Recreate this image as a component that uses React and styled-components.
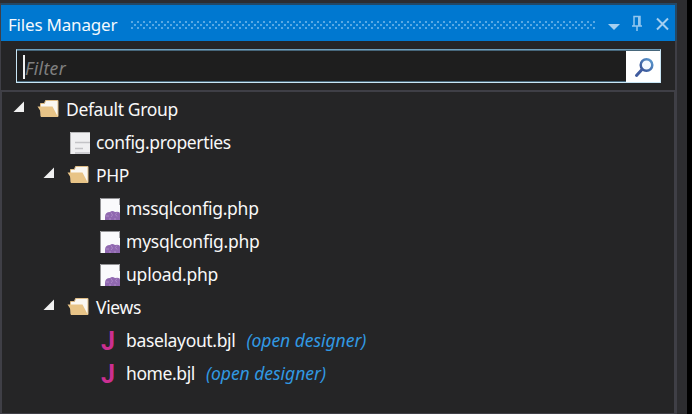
import React from 'react';
import styled, { createGlobalStyle } from 'styled-components';

const GlobalStyle = createGlobalStyle`
  * { box-sizing: border-box; }
  body { margin: 0; background: #000; font-family: "Noto Sans", sans-serif; }
`;

const Frame = styled.div`
  width: 692px;
  height: 414px;
  overflow: hidden;
  background: #000;
`;

const Dock = styled.div`
  width: 687px;
  height: 414px;
  padding-top: 3px;
  background: #2d2d30;
`;

const Panel = styled.section`
  width: 677px;
  height: 411px;
  display: flex;
  flex-direction: column;
  border-right: 2px solid #3f3f46;
  border-left: 1px solid #3f3f46;
  background: #252526;
`;

const TitleBar = styled.header`
  width: 676px;
  height: 38px;
  flex: none;
  display: flex;
  align-items: center;
  border-top: 2px solid #254865;
  border-right: 2px solid #254865;
  padding-left: 7px;
  background: #0078d0;
`;

const Title = styled.h1`
  margin: 3px 0 0;
  width: 123px;
  font-size: 17px;
  line-height: 24px;
  font-weight: 400;
  letter-spacing: -0.2px;
  white-space: nowrap;
  color: #f4f9fd;
`;

const Grip = styled.svg`
  display: block;
  flex: none;
  margin-top: 3px;
`;

const TitleButton = styled.button`
  display: flex;
  flex: none;
  width: ${(p) => p.$width}px;
  height: 20px;
  margin-left: ${(p) => p.$gap}px;
  padding: 0;
  border: 0;
  background: none;
`;

const FilterArea = styled.div`
  height: 49px;
  flex: none;
  padding: 8px 0 0 15px;
`;

const FilterBox = styled.div`
  display: flex;
  width: 645px;
  height: 34px;
  border: 1px solid #c9e6f5;
  border-top-color: #6f9fba;
  box-shadow: inset 0 1px #47677b, inset 0 -1px #47677b;
  background: #1e1e1e;
`;

const FilterField = styled.div`
  flex: 1;
  display: flex;
  align-items: center;
  padding: 2px 0 0 6px;
`;

const Caret = styled.i`
  width: 2px;
  height: 24px;
  background: #f1f1f1;
`;

const Placeholder = styled.span`
  margin-top: 1px;
  font-size: 17.5px;
  line-height: 24px;
  font-style: italic;
  letter-spacing: 0.35px;
  color: #808080;
`;

const SearchButton = styled.button`
  width: 34px;
  height: 31px;
  margin-top: 1px;
  padding: 0;
  border: 0;
  background: #fff;
  svg { display: block; }
`;

const Tree = styled.div`
  flex: 1;
  margin-right: -1px;
  border: 2px solid #3f3f46;
  border-width: 2px 2px 1px 1px;
  padding-top: 1px;
`;

const Row = styled.div`
  display: flex;
  align-items: center;
  height: 33px;
  padding-left: ${(p) => 10 + p.$level * 30}px;
`;

const ArrowSlot = styled.span`
  width: 25px;
  height: 20px;
  flex: none;
  svg { display: block; }
`;

const IconSlot = styled.span`
  display: flex;
  justify-content: flex-start;
  width: 29px;
  height: 24px;
  flex: none;
`;

const Label = styled.span`
  margin-top: -1px;
  font-size: 17.5px;
  line-height: 26px;
  letter-spacing: ${(p) => p.$spacing}px;
  white-space: pre;
  color: #f8f8f8;
`;

const DesignerLink = styled.a`
  margin: -1px 0 0 11px;
  font-size: 17.5px;
  line-height: 26px;
  font-style: italic;
  letter-spacing: -0.03px;
  white-space: pre;
  color: #3199e2;
`;

const Letter = styled.b`
  padding: 1px 0 0 4px;
  font: 700 25px/24px Roboto, sans-serif;
  color: #cb2f91;
`;

const FolderIcon = () => (
  <svg width="24" height="24">
    <path d="M3.5 9V5.5h4l1-3h12.5v16H4z" fill="#faf7f1" stroke="#dfbd86" />
    <path d="M0.5 8.5H15.5L21 19H4v-5z" fill="#e8c487" />
  </svg>
);

const TextIcon = () => (
  <svg width="24" height="24">
    <path d="M3 1h20v22H3z" fill="#efeff1" />
    <path d="M3.5 23V1.5H23" fill="none" stroke="#b6b6b8" />
    <path d="M8 11.5h15M8 17.5h8M8 22h15" stroke="#c3c3c7" strokeWidth="1.5" />
  </svg>
);

const PhpIcon = () => (
  <svg width="24" height="24">
    <path d="M3 1h20v22H3z" fill="#fafafc" />
    <path d="M3.5 23V1.5H22" fill="none" stroke="#929295" />
    <path d="M22.5 1v7" stroke="#a9a9ad" />
    <path d="M8 23v-3q0-5 5-5 2-2 5 0 5-1 5 2v6z" fill="#9068b0" />
    <path d="M14 15.5q3 3 0 4.5M20 15.5q-3 2 0 4M9 19h3M13 23v-2M18 23v-2" fill="none" stroke="#ad8bc6" />
  </svg>
);

const icons = {
  folder: <FolderIcon />,
  text: <TextIcon />,
  php: <PhpIcon />,
  layout: <Letter>J</Letter>,
};

const rows = [
  { name: 'Default Group', level: 0, icon: 'folder', spacing: -0.36 },
  { name: 'config.properties', level: 1, icon: 'text', spacing: -0.36 },
  { name: 'PHP', level: 1, icon: 'folder', spacing: -0.4 },
  { name: 'mssqlconfig.php', level: 2, icon: 'php', spacing: -0.26 },
  { name: 'mysqlconfig.php', level: 2, icon: 'php', spacing: -0.23 },
  { name: 'upload.php', level: 2, icon: 'php', spacing: -0.22 },
  { name: 'Views', level: 1, icon: 'folder', spacing: -0.35 },
  { name: 'baselayout.bjl', level: 2, icon: 'layout', spacing: -0.35 },
  { name: 'home.bjl', level: 2, icon: 'layout', spacing: -0.4 },
];

const TreeRow = ({ name, level, icon, spacing }) => (
  <Row $level={level}>
    <ArrowSlot>
      {icon === 'folder' && (
        <svg width="25" height="20">
          <path d="M12 1.5v10.5H1.5z" fill="#f1f1f1" />
        </svg>
      )}
    </ArrowSlot>
    <IconSlot>{icons[icon]}</IconSlot>
    <Label $spacing={spacing}>{name}</Label>
    {icon === 'layout' && <DesignerLink>(open designer)</DesignerLink>}
  </Row>
);

export default function App() {
  return (
    <Frame>
      <GlobalStyle />
      <Dock>
        <Panel>
          <TitleBar>
            <Title>Files Manager</Title>
            <Grip width="464" height="8">
              <defs>
                <pattern id="dots" width="6" height="6" patternUnits="userSpaceOnUse">
                  <path d="M0 0h2v2H0zM3 3h2v2H3z" fill="#59a9e4" />
                </pattern>
              </defs>
              <rect width="464" height="8" fill="url(#dots)" />
            </Grip>
            <TitleButton $width={12} $gap={13} aria-label="Window options">
              <svg width="12" height="20">
                <path d="M0 11h12l-6 6z" fill="#a5cff0" />
              </svg>
            </TitleButton>
            <TitleButton $width={12} $gap={11} aria-label="Pin">
              <svg width="12" height="20">
                <path d="M3 13V3.5h6V13M1 13h10M6 13v5" fill="none" stroke="#93c6ee" strokeWidth="1.5" />
                <path d="M8 3v10" stroke="#93c6ee" strokeWidth="2" />
              </svg>
            </TitleButton>
            <TitleButton $width={14} $gap={13} aria-label="Close">
              <svg width="14" height="20">
                <path d="M1 5.5l11 11M12 5.5L1 16.5" stroke="#a5cff0" strokeWidth="2" />
              </svg>
            </TitleButton>
          </TitleBar>
          <FilterArea>
            <FilterBox>
              <FilterField>
                <Caret />
                <Placeholder>Filter</Placeholder>
              </FilterField>
              <SearchButton aria-label="Search">
                <svg width="34" height="31">
                  <defs>
                    <linearGradient id="lens" x1="1" y1="0" x2="0" y2="1">
                      <stop offset="0" stopColor="#5d9bd0" />
                      <stop offset="1" stopColor="#344d92" />
                    </linearGradient>
                  </defs>
                  <circle cx="20.5" cy="14" r="5.8" fill="#f4f9ff" stroke="url(#lens)" strokeWidth="2.5" />
                  <path d="M16 18.5l-5.5 6" stroke="#405c9f" strokeWidth="3" strokeLinecap="round" />
                </svg>
              </SearchButton>
            </FilterBox>
          </FilterArea>
          <Tree>
            {rows.map((row) => (
              <TreeRow key={row.name} {...row} />
            ))}
          </Tree>
        </Panel>
      </Dock>
    </Frame>
  );
}
